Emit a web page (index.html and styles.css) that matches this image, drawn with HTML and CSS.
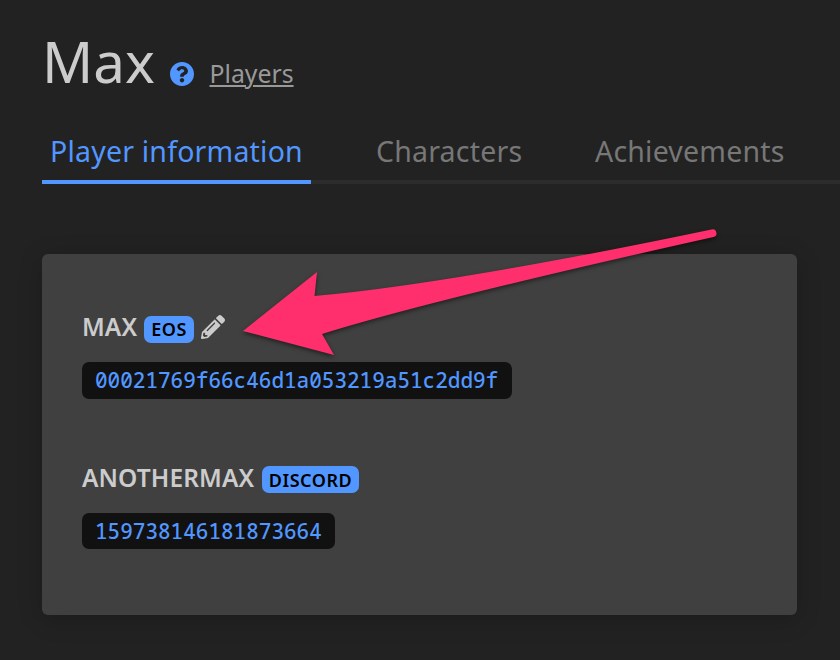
FILE: index.html
```
<!DOCTYPE html>
<html lang="en">
<head>
<meta charset="utf-8">
<title>Max</title>
<link rel="stylesheet" href="styles.css">
</head>
<body>
<header class="header">
  <h1 class="title">Max</h1>
  <svg class="help" viewBox="8 8 496 496"><path d="M504 256c0 136.997-111.043 248-248 248S8 392.997 8 256C8 119.083 119.043 8 256 8s248 111.083 248 248zM262.655 90c-54.497 0-89.255 22.957-116.549 63.758-3.536 5.286-2.353 12.415 2.715 16.258l34.699 26.31c5.205 3.947 12.621 3.008 16.665-2.122 17.864-22.658 30.113-35.797 57.303-35.797 20.429 0 45.698 13.148 45.698 32.958 0 14.976-12.363 22.667-32.534 33.976C247.128 238.528 216 254.941 216 296v4c0 6.627 5.373 12 12 12h56c6.627 0 12-5.373 12-12v-1.333c0-28.462 83.186-29.647 83.186-106.667 0-58.002-60.165-102-116.531-102zM256 338c-25.365 0-46 20.635-46 46 0 25.364 20.635 46 46 46s46-20.636 46-46c0-25.364-20.635-46-46-46z"/></svg>
  <a class="back">Players</a>
</header>
<nav class="tabs">
  <a class="tab active">Player information</a>
  <a class="tab characters">Characters</a>
  <a class="tab achievements">Achievements</a>
</nav>
<main class="card">
  <section class="account">
    <div class="name-row">
      <span class="name">MAX</span>
      <span class="badge eos">EOS</span>
      <svg class="edit" viewBox="0 0 512 512"><path d="M497.9 142.1l-46.1 46.1c-4.7 4.7-12.3 4.7-17 0l-111-111c-4.7-4.7-4.7-12.3 0-17l46.1-46.1c18.7-18.7 49.1-18.7 67.9 0l60.1 60.1c18.8 18.7 18.8 49.1 0 67.9zM284.2 99.8L21.6 362.4.4 483.9c-2.9 16.4 11.4 30.6 27.8 27.8l121.5-21.3 262.6-262.6c4.7-4.7 4.7-12.3 0-17l-111-111c-4.8-4.7-12.4-4.7-17.1 0zM124.1 339.9c-5.5-5.5-5.5-14.3 0-19.8l154-154c5.5-5.5 14.3-5.5 19.8 0s5.5 14.3 0 19.8l-154 154c-5.5 5.5-14.3 5.5-19.8 0zM88 424h48v36.3l-64.5 11.3-31.1-31.1L51.7 376H88v48z"/></svg>
    </div>
    <code class="id long">00021769f66c46d1a053219a51c2dd9f</code>
  </section>
  <section class="account">
    <div class="name-row">
      <span class="name another">ANOTHERMAX</span>
      <span class="badge discord">DISCORD</span>
    </div>
    <code class="id short">159738146181873664</code>
  </section>
</main>
<svg class="arrow" viewBox="0 0 500 150"><path d="M13 111L87 52L84.500 76Q220 64 481.500 9.400A3.900 3.900 0 0 1 483.500 17Q205 79 92 114L104 135Z"/></svg>
</body>
</html>
```
FILE: styles.css
```
* { box-sizing: border-box; }
body {
  margin: 0;
  width: 840px;
  height: 660px;
  overflow: hidden;
  background: #222;
  color: #ccc;
  font-family: "Noto Sans", sans-serif;
}
.header {
  display: flex;
  align-items: baseline;
  height: 124px;
  padding: 23px 0 0 42px;
}
.title {
  margin: 0;
  width: 128px;
  font-size: 56.5px;
  line-height: 78px;
  font-weight: 400;
}
.help {
  width: 24px;
  height: 24px;
  margin-right: 15.5px;
  fill: #5297ff;
  transform: translateY(3px);
}
.back {
  color: #999;
  font-size: 24.8px;
  line-height: 34px;
  text-decoration: underline;
  text-decoration-thickness: 2px;
  text-underline-offset: 2px;
}
.tabs {
  display: flex;
  height: 60px;
  margin-left: 42px;
  box-shadow: inset 0 -4px #2c2c2c;
}
.tab {
  padding: 6px 0 0 8px;
  font-size: 28.5px;
  line-height: 43px;
  letter-spacing: .2px;
  color: #777;
  white-space: nowrap;
}
.tab.active { width: 269px; color: #5297ff; border-bottom: 4px solid #5297ff; }
.characters { width: 219px; padding-left: 65px; }
.achievements { padding-left: 65px; }
.card {
  width: 755px;
  height: 361px;
  margin: 70px 0 0 42px;
  padding: 55px 40px;
  border-radius: 6px;
  background: #404040;
  box-shadow: 0 4px 24px rgba(0, 0, 0, .2);
}
.account { height: 151px; }
.name-row {
  display: flex;
  align-items: center;
  height: 36px;
  margin-bottom: 17px;
}
.name {
  width: 62px;
  font-size: 24.5px;
  font-weight: 600;
  line-height: 36px;
  letter-spacing: .1px;
}
.name.another { width: 180px; }
.badge {
  height: 27px;
  margin-top: 4px;
  border-radius: 7px;
  background: #5297ff;
  color: #000;
  font-size: 18px;
  font-weight: 600;
  line-height: 27px;
  text-align: center;
  letter-spacing: .5px;
}
.eos { width: 50px; }
.discord { width: 97px; margin-top: 2px; line-height: 28px; }
.edit { width: 24px; height: 24px; margin-left: 7px; fill: #ccc; }
.id {
  display: block;
  height: 37px;
  padding-left: 13px;
  border-radius: 7px;
  background: #111;
  color: #5297ff;
  font: 500 21px/36px "Noto Sans Mono", "DejaVu Sans Mono", monospace;
}
.long { width: 430px; }
.short { width: 253px; height: 36px; }
.arrow {
  position: absolute;
  left: 230px;
  top: 220px;
  width: 500px;
  height: 150px;
  fill: #ff2f6d;
  filter: drop-shadow(0 2px 2px rgba(0, 0, 0, .5));
}
```
